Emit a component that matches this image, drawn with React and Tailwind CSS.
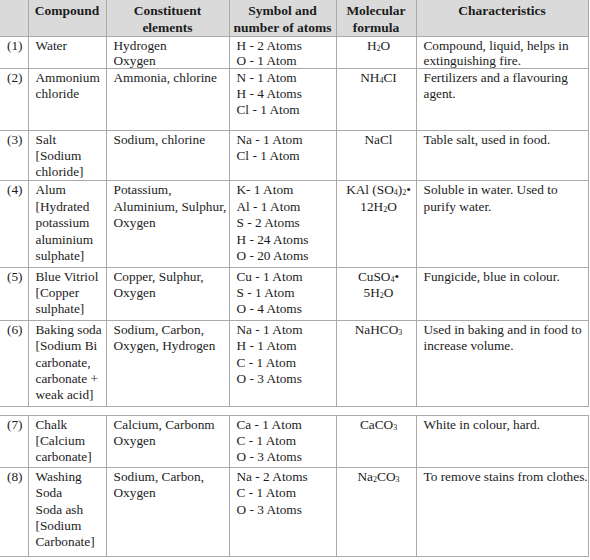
import React from "react";

const S = ({ children }) => <sub className="text-[8px] relative top-[1px]">{children}</sub>;

const rowsA = [
  {
    n: "(1)", h: "h-[32px] leading-[15px]",
    name: ["Water"],
    els: ["Hydrogen", "Oxygen"],
    atoms: ["H - 2 Atoms", "O - 1 Atom"],
    formula: [<>H<S>2</S>O</>],
    ch: "Compound, liquid, helps in extinguishing fire.",
  },
  {
    n: "(2)", h: "h-[62px]",
    name: ["Ammonium", "chloride"],
    els: ["Ammonia, chlorine"],
    atoms: ["N - 1 Atom", "H - 4 Atoms", "Cl - 1 Atom"],
    formula: [<>NH<S>4</S>CI</>],
    ch: "Fertilizers and a flavouring agent.",
  },
  {
    n: "(3)", h: "h-[50px]",
    name: ["Salt", "[Sodium", "chloride]"],
    els: ["Sodium, chlorine"],
    atoms: ["Na - 1 Atom", "Cl - 1 Atom"],
    formula: ["NaCl"],
    ch: "Table salt, used in food.",
  },
  {
    n: "(4)", h: "h-[87px] leading-[16.5px]",
    name: ["Alum", "[Hydrated", "potassium", "aluminium", "sulphate]"],
    els: ["Potassium,", "Aluminium, Sulphur,", "Oxygen"],
    atoms: ["K- 1 Atom", "Al - 1 Atom", "S - 2 Atoms", "H - 24 Atoms", "O - 20 Atoms"],
    formula: [<>KAl (SO<S>4</S>)<S>2</S>•</>, <>12H<S>2</S>O</>],
    ch: "Soluble in water. Used to purify water.",
  },
  {
    n: "(5)", h: "h-[53px]",
    name: ["Blue Vitriol", "[Copper", "sulphate]"],
    els: ["Copper, Sulphur,", "Oxygen"],
    atoms: ["Cu - 1 Atom", "S - 1 Atom", "O - 4 Atoms"],
    formula: [<>CuSO<S>4</S>•</>, <>5H<S>2</S>O</>],
    ch: "Fungicide, blue in colour.",
  },
  {
    n: "(6)", h: "h-[86px] leading-[16.3px]",
    name: ["Baking soda", "[Sodium Bi", "carbonate,", "carbonate +", "weak acid]"],
    els: ["Sodium, Carbon,", "Oxygen, Hydrogen"],
    atoms: ["Na - 1 Atom", "H - 1 Atom", "C - 1 Atom", "O - 3 Atoms"],
    formula: [<>NaHCO<S>3</S></>],
    ch: "Used in baking and in food to increase volume.",
  },
];

const rowsB = [
  {
    n: "(7)", h: "h-[52px]",
    name: ["Chalk", "[Calcium", "carbonate]"],
    els: ["Calcium, Carbonm", "Oxygen"],
    atoms: ["Ca - 1 Atom", "C - 1 Atom", "O - 3 Atoms"],
    formula: [<>CaCO<S>3</S></>],
    ch: "White in colour, hard.",
  },
  {
    n: "(8)", h: "h-[89px] leading-[16.3px]",
    name: ["Washing", "Soda", "Soda ash", "[Sodium", "Carbonate]"],
    els: ["Sodium, Carbon,", "Oxygen"],
    atoms: ["Na - 2 Atoms", "C - 1 Atom", "O - 3 Atoms"],
    formula: [<>Na<S>2</S>CO<S>3</S></>],
    ch: "To remove stains from clothes.",
    oneLine: true,
  },
];

const td = "align-top border border-[#a9a9a9] pt-[1px] pl-[7px] pr-[2px]";

function Lines({ items }) {
  return items.map((t, i) => <div key={i} className="whitespace-nowrap">{t}</div>);
}

function Cols() {
  return (
    <colgroup>
      <col className="w-[28px]" />
      <col className="w-[78px]" />
      <col className="w-[123px]" />
      <col className="w-[107px]" />
      <col className="w-[80px]" />
      <col className="w-[172px]" />
    </colgroup>
  );
}

function Row({ r }) {
  return (
    <tr className={r.h}>
      <td className={`${td} border-l-0 pl-[6px]`}>{r.n}</td>
      <td className={td}><Lines items={r.name} /></td>
      <td className={td}><Lines items={r.els} /></td>
      <td className={td}><Lines items={r.atoms} /></td>
      <td className={`${td} text-center pl-0 pr-0`}><Lines items={r.formula} /></td>
      <td className={`${td} ${r.oneLine ? "whitespace-nowrap" : ""}`}>{r.ch}</td>
    </tr>
  );
}

export default function App() {
  return (
    <div className="w-[590px] h-[560px] bg-white text-[#1c1c1c] text-[13.3px] leading-[16px] overflow-hidden font-['Liberation_Serif','DejaVu_Serif',serif]">
      <table className="w-[588px] table-fixed border-collapse">
        <Cols />
        <thead>
          <tr className="h-[36px] bg-[#dadada] font-bold text-[13.5px]">
            {["", "Compound", "Constituent elements", "Symbol and number of atoms", "Molecular formula", "Characteristics"].map((h, i) => (
              <th key={i} className={`align-top border border-t-0 border-[#a9a9a9] pt-[2px] px-[4px] text-center leading-[17px] ${i === 0 ? "border-l-0" : ""}`}>
                {h}
              </th>
            ))}
          </tr>
        </thead>
        <tbody>
          {rowsA.map(r => <Row key={r.n} r={r} />)}
        </tbody>
      </table>
      <div className="h-[8px]" />
      <table className="w-[588px] table-fixed border-collapse">
        <Cols />
        <tbody>
          {rowsB.map(r => <Row key={r.n} r={r} />)}
        </tbody>
      </table>
    </div>
  );
}
